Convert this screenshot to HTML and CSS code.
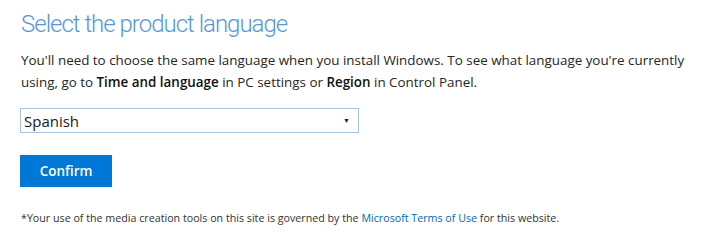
FILE: index.html
```html
<!DOCTYPE html>
<html>
<head>
<meta charset="utf-8">
<link rel="stylesheet" href="styles.css">
</head>
<body>
<main class="page">
  <h1 class="title">Select the product language</h1>
  <p class="intro">You'll need to choose the same language when you install Windows. To see what language you're currently using, go to <b>Time and language</b> in PC settings or <b>Region</b> in Control Panel.</p>
  <div class="select">
    <span class="select-value">Spanish</span>
    <span class="select-arrow">▼</span>
  </div>
  <button class="btn">Confirm</button>
  <p class="terms">*Your use of the media creation tools on this site is governed by the <a class="link" href="#">Microsoft Terms of Use</a> for this website.</p>
</main>
</body>
</html>
```

FILE: styles.css
```css
html, body {
  margin: 0;
  padding: 0;
  background: #ffffff;
}
body {
  font-family: "Open Sans", "Noto Sans", sans-serif;
  color: #262626;
}
.page {
  padding: 0 20px 0 20px;
  display: flex;
  flex-direction: column;
  align-items: flex-start;
}
.title {
  margin: 6px 0 0 1px;
  font-family: Roboto, "Open Sans", sans-serif;
  font-size: 24px;
  font-weight: 300;
  color: #5797d6;
  line-height: 36px;
  letter-spacing: -1px;
}
.intro {
  margin: 7px 0 0 1px;
  font-size: 13.4px;
  line-height: 22px;
  color: #262626;
  max-width: 680px;
}
.intro b {
  font-weight: 600;
  color: #111;
}
.select {
  margin-top: 15px;
  box-sizing: border-box;
  width: 339px;
  height: 25px;
  border: 1px solid #a9c4e0;
  display: flex;
  align-items: center;
  justify-content: space-between;
  padding: 0 8px 0 3px;
}
.select-value {
  font-size: 15px;
  color: #1a1a1a;
}
.select-arrow {
  font-size: 7px;
  color: #222;
}
.btn {
  margin-top: 22px;
  width: 92px;
  height: 32px;
  border: none;
  background: #0078d7;
  color: #ffffff;
  font-family: "Open Sans", "Noto Sans", sans-serif;
  font-size: 13.5px;
  font-weight: 600;
  padding: 0;
}
.terms {
  margin: 24px 0 0 1px;
  font-size: 10.7px;
  color: #333;
  line-height: 14px;
}
.link {
  color: #0067b8;
  text-decoration: none;
}
```
